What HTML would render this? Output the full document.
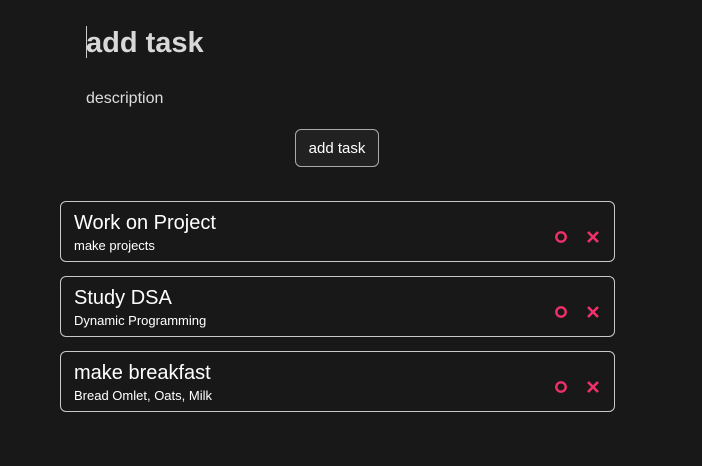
<!DOCTYPE html>
<html><head><style>
body{margin:0;width:702px;height:466px;background:#181818;font-family:"Liberation Sans",sans-serif;color:#eee;position:relative;overflow:hidden}
.abs{position:absolute}
.card{position:absolute;left:60px;width:553px;height:59px;border:1px solid #c8c8c8;border-radius:6px;box-sizing:content-box}
.t{position:absolute;left:13px;top:10px;font-size:20px;color:#fff}
.d{position:absolute;left:13px;top:36px;font-size:13px;color:#fff}
.ic{position:absolute;left:490px;top:27px}
</style></head><body>
<div class="abs" style="left:86px;top:26px;width:1px;height:32px;background:#ccc"></div>
<div class="abs" style="left:86px;top:27px;font-size:29px;font-weight:bold;color:#d8d8d8">add task</div>
<div class="abs" style="left:86px;top:90px;font-size:16px;color:#ddd">description</div>
<div class="abs" style="left:295px;top:129px;width:82px;height:36px;border:1px solid #aaa;border-radius:6px;background:#212121;font-size:15px;color:#fff;text-align:center;line-height:38px">add task</div>
<div class="card" style="top:201px"><div class="t">Work on Project</div><div class="d">make projects</div>
<svg class="ic" width="60" height="20"><circle cx="10" cy="8" r="4.7" fill="none" stroke="#f0306a" stroke-width="2.4"/><path d="M37 3L47 13M47 3L37 13" stroke="#f0306a" stroke-width="2.6"/></svg></div>
<div class="card" style="top:276px"><div class="t">Study DSA</div><div class="d">Dynamic Programming</div>
<svg class="ic" width="60" height="20"><circle cx="10" cy="8" r="4.7" fill="none" stroke="#f0306a" stroke-width="2.4"/><path d="M37 3L47 13M47 3L37 13" stroke="#f0306a" stroke-width="2.6"/></svg></div>
<div class="card" style="top:351px"><div class="t">make breakfast</div><div class="d">Bread Omlet, Oats, Milk</div>
<svg class="ic" width="60" height="20"><circle cx="10" cy="8" r="4.7" fill="none" stroke="#f0306a" stroke-width="2.4"/><path d="M37 3L47 13M47 3L37 13" stroke="#f0306a" stroke-width="2.6"/></svg></div>
</body></html>
